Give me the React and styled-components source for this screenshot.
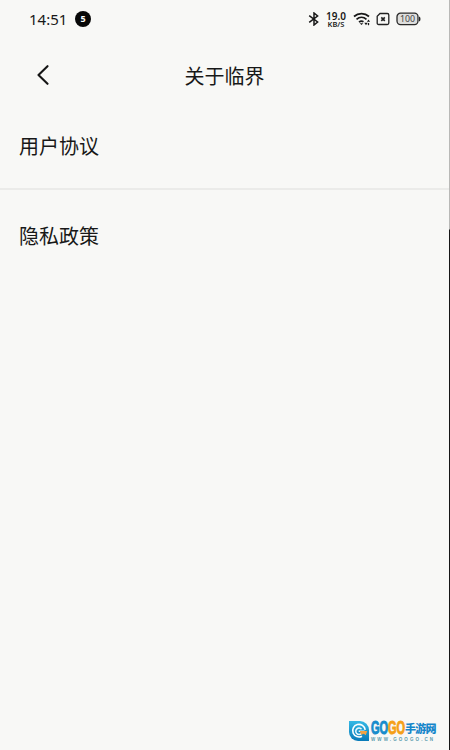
import React from 'react';
import styled, { createGlobalStyle } from 'styled-components';

const GlobalStyle = createGlobalStyle`
  body {
    margin: 0;
    background: #f8f8f6;
    overflow: hidden;
  }
`;

const Root = styled.div`
  display: grid;
  grid-template-columns: 1fr 1px;
  width: 450px;
  height: 750px;
  background: #f8f8f6;
  color: #181818;
  font-family: 'Noto Sans CJK SC', sans-serif;
`;

const Screen = styled.div`
  display: flex;
  flex-direction: column;
`;

const Edge = styled.div`
  background: linear-gradient(#b9b9b7 0 229px, #161616 230px);
`;

const StatusBar = styled.div`
  display: flex;
  align-items: center;
  height: 38px;
  padding: 0 28px 0 29px;
`;

const Clock = styled.div`
  width: 46px;
  font-family: 'Noto Sans', sans-serif;
  font-size: 15px;
  line-height: 20px;
`;

const Count = styled.div`
  width: 16px;
  height: 16px;
  border-radius: 50%;
  background: #080808;
  color: #fff;
  font: bold 9px/16px 'Noto Sans', sans-serif;
  text-align: center;
`;

const StatusIcons = styled.div`
  display: flex;
  align-items: center;
  height: 20px;
  margin-left: auto;
`;

const Speed = styled.div`
  display: grid;
  width: 22px;
  margin: 0 6px 0 5px;
  font-family: 'Noto Sans', sans-serif;
  font-weight: 600;
  text-align: center;
  white-space: nowrap;
`;

const SpeedValue = styled.span`
  font-size: 10px;
  line-height: 10px;
`;

const SpeedUnit = styled.span`
  font-size: 7.5px;
  line-height: 7px;
`;

const SimSlot = styled.div`
  display: flex;
  margin: 0 6px 0 5px;
`;

const Header = styled.div`
  display: grid;
  grid-template-columns: 86px 1fr 86px;
  align-items: center;
  height: 74px;
`;

const Back = styled.button`
  display: flex;
  padding: 0 0 0 36px;
  border: 0;
  background: none;
  color: #151515;
`;

const Title = styled.div`
  padding-top: 2px;
  font-size: 20px;
  line-height: 28px;
  text-align: center;
`;

const Row = styled.div`
  display: flex;
  align-items: center;
  height: 90px;
  padding: 0 19px;
  font-size: 20px;
`;

const FirstRow = styled(Row)`
  height: 66px;
  padding-bottom: 10px;
  border-bottom: 2px solid #ebebe9;
`;

const Footer = styled.div`
  display: flex;
  align-items: center;
  gap: 2px;
  height: 23px;
  margin: auto 13px 8px auto;
`;

const Brand = styled.div`
  width: 65px;
`;

const BrandName = styled.div`
  display: flex;
  align-items: center;
  height: 16px;
  white-space: nowrap;
`;

const Latin = styled.span`
  flex: none;
  width: 17px;
  color: ${({ color }) => color};
  font: 900 18px/16px 'Liberation Sans', sans-serif;
  -webkit-text-stroke: 1px ${({ color }) => color};
  transform: scaleX(0.61);
  transform-origin: left;
`;

const Chinese = styled.span`
  color: #1686ca;
  font-size: 11px;
  font-weight: 900;
  line-height: 16px;
  letter-spacing: -0.7px;
`;

const Domain = styled.div`
  padding-top: 1px;
  color: #5b9cae;
  font: bold 4.5px/5px 'Liberation Sans', sans-serif;
  letter-spacing: 2.1px;
  white-space: nowrap;
`;

const Bluetooth = () => (
  <svg width="12" height="14" viewBox="0 0 12 14" fill="none" stroke="#181818" strokeWidth="1.5">
    <path d="M1.2 3.7 9.6 10 6 13V1l3.6 3L1.2 10.3" />
  </svg>
);

const Wifi = () => (
  <svg width="18" height="14" viewBox="0 0 18 14" fill="none" stroke="#181818" strokeWidth="1.7">
    <path d="M1 4.5C5.2.7 11.8.7 16 4.5M3.5 7.4c3-2.6 7-2.6 10 0M6 10.1c1.5-1.2 3.1-1.3 4.5-.3" />
    <path d="m6.7 11.2 1.8 1.8 1.8-1.8Z" fill="#181818" stroke="none" />
    <path d="m11.3 10.8 1.7 2.4 1.7-2.4ZM13.9 9.8l1.6-2.3 1.6 2.3Z" fill="#181818" stroke="none" />
    <path d="M15.5 11v2.2" strokeWidth="1.3" />
  </svg>
);

const SimOff = () => (
  <svg width="14" height="14" viewBox="0 0 14 14" fill="none" stroke="#222" strokeWidth="1.3">
    <path d="M4 1.5h7.3q1.5 0 1.5 1.5v8q0 1.5-1.5 1.5H2.7q-1.5 0-1.5-1.5V4.3Z" />
    <path d="m5.3 5.4 3.5 3.5m0-3.5L5.3 8.9" strokeWidth="1.6" />
  </svg>
);

const Battery = () => (
  <svg width="25" height="14" viewBox="0 0 25 14">
    <rect x="1" y="1.2" width="21" height="11.4" rx="3.5" fill="#dededc" stroke="#292929" strokeWidth="1.3" />
    <path d="M23 4.5q1.5.3 1.5 2.4T23 9.4Z" fill="#292929" />
    <text x="11.5" y="10.2" textAnchor="middle" fill="#444" fontFamily="Noto Sans, sans-serif" fontSize="8.8">100</text>
  </svg>
);

const Chevron = () => (
  <svg width="14" height="20" viewBox="0 0 14 20" fill="none" stroke="currentColor" strokeWidth="2.1" strokeLinecap="round" strokeLinejoin="round">
    <path d="M11.5 1.2 2.5 10l9 8.8" />
  </svg>
);

const Logo = () => (
  <svg width="20" height="20" viewBox="0 0 20 20" fill="none">
    <defs>
      <linearGradient id="logo" x2="0" y2="1">
        <stop stopColor="#35b9e5" />
        <stop offset="1" stopColor="#087ab8" />
      </linearGradient>
    </defs>
    <path d="M0 0h11a9 9 0 0 1 9 9v11H9a9 9 0 0 1-9-9Z" fill="url(#logo)" />
    <path d="M16.2 8.8A6.3 6.3 0 1 0 13 15.2" stroke="#fff" strokeWidth="1.6" />
    <path d="M12.5 8.3a3.2 3.2 0 1 0-.2 4.2M9.7 10.2h5.8" stroke="#e9faff" strokeWidth="1.5" />
    <path d="M10.8 10h7.4l-1.4 4.3-2-1.5-2.7 1Z" fill="#f5a344" />
  </svg>
);

const App = () => (
  <>
    <GlobalStyle />
    <Root>
      <Screen>
        <StatusBar>
          <Clock>14:51</Clock>
          <Count>5</Count>
          <StatusIcons>
            <Bluetooth />
            <Speed>
              <SpeedValue>19.0</SpeedValue>
              <SpeedUnit>KB/S</SpeedUnit>
            </Speed>
            <Wifi />
            <SimSlot><SimOff /></SimSlot>
            <Battery />
          </StatusIcons>
        </StatusBar>
        <Header>
          <Back aria-label="返回"><Chevron /></Back>
          <Title>关于临界</Title>
        </Header>
        <FirstRow>用户协议</FirstRow>
        <Row>隐私政策</Row>
        <Footer>
          <Logo />
          <Brand>
            <BrandName>
              <Latin color="#168ccc">GO</Latin>
              <Latin color="#f5a018">GO</Latin>
              <Chinese>手游网</Chinese>
            </BrandName>
            <Domain>WWW.GOOGO.CN</Domain>
          </Brand>
        </Footer>
      </Screen>
      <Edge />
    </Root>
  </>
);

export default App;
